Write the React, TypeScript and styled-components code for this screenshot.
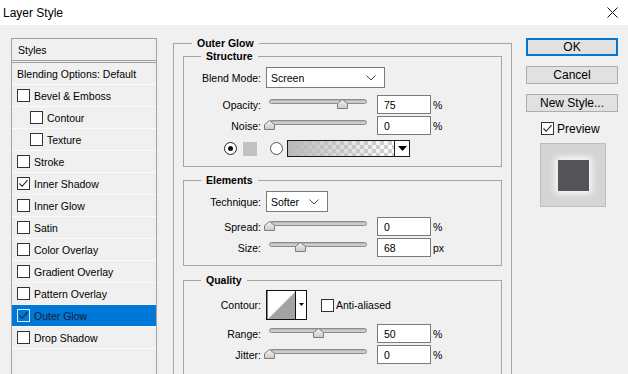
import React from "react";
import styled, { createGlobalStyle, css } from "styled-components";

const GlobalStyle = createGlobalStyle`
  body {
    margin: 0;
    background: #f0f0f0;
  }
`;

const UI_FONT = `"Liberation Sans", Arial, sans-serif`;

interface StyleItem {
  name: string;
  checked?: boolean;
  indent?: boolean;
  selected?: boolean;
}

const styleItems: StyleItem[] = [
  { name: "Bevel & Emboss" },
  { name: "Contour", indent: true },
  { name: "Texture", indent: true },
  { name: "Stroke" },
  { name: "Inner Shadow", checked: true },
  { name: "Inner Glow" },
  { name: "Satin" },
  { name: "Color Overlay" },
  { name: "Gradient Overlay" },
  { name: "Pattern Overlay" },
  { name: "Outer Glow", checked: true, selected: true },
  { name: "Drop Shadow" },
];

const Check: React.FC<{ checked?: boolean; selected?: boolean }> = ({ checked, selected }) => (
  <Box $selected={selected}>
    {checked && (
      <svg width="11" height="11" viewBox="0 0 11 11">
        <path d="M1.5 5.5 L4.2 8.3 L9.5 2.2" fill="none" stroke={selected ? "#13233f" : "#222"} strokeWidth="1.1" />
      </svg>
    )}
  </Box>
);

const Slider: React.FC<{ value: number }> = ({ value }) => (
  <SliderBox>
    <Track />
    <Thumb style={{ left: 3 + value * 98 - 5.5 }}>
      <svg width="11" height="10" viewBox="0 0 11 10">
        <defs>
          <linearGradient id="thumbFill" x1="0" y1="0" x2="0" y2="1">
            <stop offset="0" stopColor="#f4f4f4" />
            <stop offset="1" stopColor="#c9c9c9" />
          </linearGradient>
        </defs>
        <polygon points="5.5,0.5 10.5,4.5 10.5,9.5 0.5,9.5 0.5,4.5" fill="url(#thumbFill)" stroke="#7c7c7c" />
      </svg>
    </Thumb>
  </SliderBox>
);

const SliderRow: React.FC<{ label: string; value: number; amount: string; unit: string; top: number }> = ({
  label,
  value,
  amount,
  unit,
  top,
}) => (
  <FieldRow $top={top}>
    <Label>{label}</Label>
    <Slider value={value} />
    <NumberBox readOnly value={amount} />
    <Unit>{unit}</Unit>
  </FieldRow>
);

const Chevron = () => (
  <svg width="10" height="6" viewBox="0 0 10 6">
    <path d="M0.5 0.5 L5 5 L9.5 0.5" fill="none" stroke="#444" strokeWidth="1" />
  </svg>
);

const App: React.FC = () => {
  return (
    <Window>
      <GlobalStyle />
      <TitleBar>
        <Title>Layer Style</Title>
        <svg width="11" height="11" viewBox="0 0 11 11">
          <path d="M0.5 0.5 L10.5 10.5 M10.5 0.5 L0.5 10.5" stroke="#111" strokeWidth="1" />
        </svg>
      </TitleBar>
      <Body>
        <StylesPanel>
          <PanelHeader>Styles</PanelHeader>
          <StyleRow>Blending Options: Default</StyleRow>
          {styleItems.map((item) => (
            <StyleRow key={item.name} $indent={item.indent} $selected={item.selected}>
              <Check checked={item.checked} selected={item.selected} />
              {item.name}
            </StyleRow>
          ))}
        </StylesPanel>

        <OuterGroup>
          <Legend $offset={9}>Outer Glow</Legend>

          <Group $top={1} $bottom={9}>
            <Legend $offset={17}>Structure</Legend>
            <FieldRow $top={4}>
              <Label>Blend Mode:</Label>
              <Select $width={119}>
                Screen
                <Chevron />
              </Select>
            </FieldRow>
            <SliderRow label="Opacity:" value={0.75} amount="75" unit="%" top={7} />
            <SliderRow label="Noise:" value={0} amount="0" unit="%" top={2} />
            <ColorRow>
              <Radio $on />
              <Swatch />
              <Radio />
              <GradientPicker>
                <GradientFill />
                <GradientArrow>
                  <svg width="9" height="5" viewBox="0 0 9 5">
                    <polygon points="0,0 9,0 4.5,5" fill="#000" />
                  </svg>
                </GradientArrow>
              </GradientPicker>
            </ColorRow>
          </Group>

          <Group $top={6} $bottom={8}>
            <Legend $offset={17}>Elements</Legend>
            <FieldRow $top={4}>
              <Label>Technique:</Label>
              <Select $width={62}>
                Softer
                <Chevron />
              </Select>
            </FieldRow>
            <SliderRow label="Spread:" value={0} amount="0" unit="%" top={5} />
            <SliderRow label="Size:" value={0.32} amount="68" unit="px" top={2} />
          </Group>

          <Group $top={7} $bottom={20}>
            <Legend $offset={17}>Quality</Legend>
            <FieldRow $top={3}>
              <Label>Contour:</Label>
              <ContourPicker>
                <svg width="41" height="30" viewBox="0 0 41 30">
                  <rect x="0" y="0" width="41" height="30" fill="#fff" />
                  <polygon points="2,29 29,2 29,29" fill="#a3a3a3" />
                  <path d="M1 0 V30 M0 29.5 H41 M0 0.5 H41 M40.5 0 V30 M29.5 0 V30" stroke="#111" strokeWidth="1" fill="none" />
                  <path d="M0.5 0 V30" stroke="#111" strokeWidth="1" />
                  <polygon points="33,13 38,13 35.5,16" fill="#000" />
                </svg>
              </ContourPicker>
              <AntiAlias>
                <Check />
                Anti-aliased
              </AntiAlias>
            </FieldRow>
            <SliderRow label="Range:" value={0.5} amount="50" unit="%" top={4} />
            <SliderRow label="Jitter:" value={0} amount="0" unit="%" top={2} />
          </Group>
        </OuterGroup>

        <ActionColumn>
          <DialogButton $primary>OK</DialogButton>
          <DialogButton>Cancel</DialogButton>
          <DialogButton>New Style...</DialogButton>
          <PreviewToggle>
            <Check checked />
            Preview
          </PreviewToggle>
          <PreviewBox>
            <PreviewSwatch />
          </PreviewBox>
        </ActionColumn>
      </Body>
    </Window>
  );
};

export default App;

const Window = styled.div`
  width: 628px;
  height: 374px;
  overflow: hidden;
  background: #f0f0f0;
  font-family: ${UI_FONT};
  font-size: 10.5px;
  color: #000;
`;

const TitleBar = styled.div`
  height: 25px;
  background: #fff;
  display: flex;
  align-items: center;
  justify-content: space-between;
  padding: 0 10px 0 3px;
  box-sizing: border-box;
`;

const Title = styled.span`
  font-size: 12px;
  color: #000;
`;

const Body = styled.div`
  display: flex;
  align-items: flex-start;
  padding: 13px 0 0 11px;
`;

const StylesPanel = styled.div`
  width: 146px;
  height: 400px;
  box-sizing: border-box;
  border: 1px solid #a0a0a0;
  margin-right: 16px;
  flex-shrink: 0;
`;

const PanelHeader = styled.div`
  height: 21px;
  display: flex;
  align-items: center;
  padding-left: 6px;
  border-bottom: 3px double #a0a0a0;
`;

const StyleRow = styled.div<{ $indent?: boolean; $selected?: boolean }>`
  height: 21px;
  display: flex;
  align-items: center;
  gap: 4px;
  padding-left: ${(p) => (p.$indent ? 18 : 5)}px;
  border-bottom: 1px solid #fbfbfb;
  &:first-of-type {
    padding-left: 6px;
  }
  ${(p) =>
    p.$selected &&
    css`
      background: #0078d7;
      color: #0f1d3a;
    `}
`;

const Box = styled.span<{ $selected?: boolean }>`
  width: 13px;
  height: 13px;
  box-sizing: border-box;
  border: 1px solid ${(p) => (p.$selected ? "#d8e6f5" : "#333")};
  background: ${(p) => (p.$selected ? "transparent" : "#fff")};
  display: inline-flex;
  align-items: center;
  justify-content: center;
  flex-shrink: 0;
`;

const OuterGroup = styled.fieldset`
  width: 339px;
  height: 400px;
  box-sizing: border-box;
  margin: 0 14px 0 0;
  padding: 0 9px;
  border: 1px solid #a5a5a5;
  flex-shrink: 0;
  min-width: 0;
`;

const Legend = styled.legend<{ $offset: number }>`
  margin-left: ${(p) => p.$offset}px;
  padding: 0 5px;
  font-weight: bold;
  font-size: 10.5px;
  line-height: ${(p) => (p.$offset === 9 ? 10 : 14)}px;
`;

const Group = styled.fieldset<{ $top: number; $bottom: number }>`
  margin: ${(p) => p.$top}px 0 0 0;
  padding: 0 0 ${(p) => p.$bottom}px 0;
  border: 1px solid #a5a5a5;
  min-width: 0;
`;

const FieldRow = styled.div<{ $top: number }>`
  display: flex;
  align-items: center;
  margin-top: ${(p) => p.$top}px;
`;

const Label = styled.span`
  width: 77px;
  margin-right: 5px;
  text-align: right;
  flex-shrink: 0;
`;

const Select = styled.div<{ $width: number }>`
  width: ${(p) => p.$width}px;
  height: 21px;
  box-sizing: border-box;
  border: 1px solid #7a7a7a;
  background: #fff;
  display: flex;
  align-items: center;
  justify-content: space-between;
  padding: 0 8px 0 4px;
`;

const SliderBox = styled.div`
  position: relative;
  width: 111px;
  height: 19px;
  flex-shrink: 0;
`;

const Track = styled.div`
  margin: 4px 0 0 3px;
  width: 98px;
  height: 5px;
  box-sizing: border-box;
  border-radius: 3px;
  border: 1px solid #8c8c8c;
  background: linear-gradient(#a8a8a8, #d6d6d6 60%, #c2c2c2);
`;

const Thumb = styled.div`
  position: absolute;
  top: 4px;
  width: 11px;
  height: 10px;
  line-height: 0;
`;

const NumberBox = styled.input`
  width: 54px;
  height: 19px;
  box-sizing: border-box;
  border: 1px solid #7a7a7a;
  background: #fff;
  padding: 0 0 0 6px;
  margin: 0;
  font-family: ${UI_FONT};
  font-size: 10.5px;
  color: #000;
  outline: none;
`;

const Unit = styled.span`
  margin-left: 2px;
`;

const ColorRow = styled.div`
  display: flex;
  align-items: center;
  margin-top: 5px;
  padding-left: 40px;
  height: 17px;
`;

const Radio = styled.span<{ $on?: boolean }>`
  width: 13px;
  height: 13px;
  box-sizing: border-box;
  border-radius: 50%;
  border: 1px solid ${(p) => (p.$on ? "#222" : "#555")};
  background: #fff;
  display: inline-flex;
  align-items: center;
  justify-content: center;
  margin-right: ${(p) => (p.$on ? 6 : 4)}px;
  &::after {
    content: "";
    width: 5px;
    height: 5px;
    border-radius: 50%;
    background: ${(p) => (p.$on ? "#111" : "transparent")};
  }
`;

const Swatch = styled.span`
  width: 14px;
  height: 14px;
  background: #c2c2c2;
  margin-right: 13px;
`;

const GradientPicker = styled.div`
  width: 123px;
  height: 17px;
  box-sizing: border-box;
  border: 1px solid #1a1a1a;
  display: flex;
`;

const GradientFill = styled.div`
  flex: 1;
  background: linear-gradient(to right, rgba(185, 185, 185, 1), rgba(185, 185, 185, 0)),
    repeating-conic-gradient(#cfcfcf 0 25%, #ffffff 0 50%) 0 0 / 8px 8px;
`;

const GradientArrow = styled.div`
  width: 14px;
  border-left: 1px solid #1a1a1a;
  background: #fff;
  display: flex;
  align-items: center;
  justify-content: center;
`;

const ContourPicker = styled.div`
  width: 41px;
  height: 30px;
  line-height: 0;
  margin-right: 14px;
`;

const AntiAlias = styled.label`
  display: flex;
  align-items: center;
  gap: 2px;
`;

const ActionColumn = styled.div`
  width: 92px;
  display: flex;
  flex-direction: column;
  flex-shrink: 0;
`;

const DialogButton = styled.button<{ $primary?: boolean }>`
  height: 18px;
  margin: 0 0 10px 0;
  padding: 0;
  box-sizing: border-box;
  background: #e1e1e1;
  border: 1px solid #adadad;
  font-family: ${UI_FONT};
  font-size: 12px;
  color: #000;
  ${(p) =>
    p.$primary &&
    css`
      border: 2px solid #0078d7;
    `}
`;

const PreviewToggle = styled.label`
  display: flex;
  align-items: center;
  gap: 3px;
  margin-left: 15px;
  font-size: 12px;
  height: 13px;
`;

const PreviewBox = styled.div`
  width: 66px;
  height: 64px;
  box-sizing: border-box;
  margin: 8px 0 0 14px;
  background: #d5d5d5;
  border: 1px solid #bdbdbd;
  display: flex;
  align-items: center;
  justify-content: center;
`;

const PreviewSwatch = styled.div`
  width: 31px;
  height: 31px;
  background: #545458;
  box-shadow: 0 0 6px 3px rgba(255, 255, 255, 0.8);
`;
